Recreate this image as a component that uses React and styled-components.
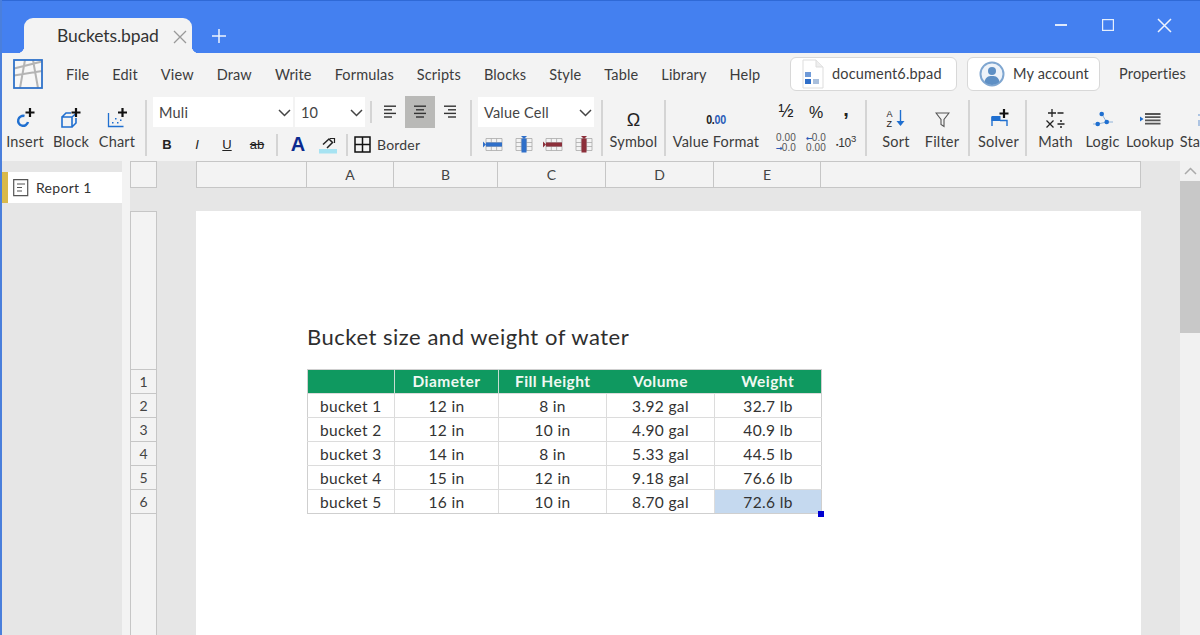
import React from "react";
import styled, { createGlobalStyle } from "styled-components";

const Global = createGlobalStyle`
  html, body { margin: 0; padding: 0; height: 100%; overflow: hidden; }
  body { font-family: Lato, "Open Sans", sans-serif; color: #3a3a3a; }
  #root { height: 100%; }
  * { box-sizing: border-box; }
`;

const Win = styled.div`
  width: 1200px; height: 635px; display: flex; flex-direction: column; overflow: hidden;
  border-left: 2px solid #4a7fdc; background: #f3f3f3;
`;
const TitleBar = styled.div`
  height: 53px; flex: none; background: #4480f0; border-top: 1px solid #2f69d6;
  display: flex; align-items: flex-end; padding-left: 22px;
`;
const Tab = styled.div`
  position: relative; width: 168px; height: 35px; background: #f3f3f3; border-radius: 9px 9px 0 0;
  display: flex; align-items: center; padding: 0 0 1px 33px; font-size: 17.5px; color: #333; letter-spacing: -.1px;
  &::before, &::after { content: ""; position: absolute; bottom: 0; width: 7px; height: 7px; }
  &::before { left: -7px; background: radial-gradient(circle at 0 0, transparent 7px, #f3f3f3 7.5px); }
  &::after { right: -7px; background: radial-gradient(circle at 100% 0, transparent 7px, #f3f3f3 7.5px); }
`;
const TabClose = styled.svg`margin-left: 14px; flex: none; margin-top: 3px;`;
const NewTab = styled.svg`margin: 0 0 10px 20px; flex: none;`;
const WinControls = styled.div`
  margin-left: auto; align-self: stretch; display: flex; align-items: flex-start; padding: 15px 8px 0 0;
`;
const WinBtn = styled.div`
  width: ${p => p.$w}px; height: 18px; display: flex; align-items: center; justify-content: center;
`;

const MenuBar = styled.div`
  height: 42px; flex: none; display: flex; align-items: center; padding-left: 11px; font-size: 14.5px; color: #3c3c3c;
`;
const Logo = styled.svg`flex: none; margin-right: 23px; margin-top: -1px;`;
const Menu = styled.nav`display: flex; gap: 23px; letter-spacing: .15px;`;
const PillRow = styled.div`margin-left: auto; display: flex; align-items: center; gap: 10px; padding-right: 14px; margin-top: -1px;`;
const Pill = styled.div`
  height: 34px; width: ${p => p.$w}px; background: #fff; border: 1px solid #d8d8d8; border-radius: 6px;
  display: flex; align-items: center; gap: 8px; padding-left: ${p => p.$pl}px; letter-spacing: .15px; white-space: nowrap;
`;
const Properties = styled.span`margin-left: 9px; letter-spacing: .15px;`;

const Toolbar = styled.div`
  height: 66px; flex: none; display: flex; align-items: center; overflow: hidden; font-size: 14.5px; color: #3c3c3c;
`;
const Divider = styled.div`
  flex: none; width: 2px; height: ${p => p.$h || 56}px; background: #d4d4d4; margin-left: ${p => p.$ml || 0}px;
`;
const Group = styled.div`
  flex: none; width: ${p => p.$w}px; height: 100%; display: flex; padding-left: ${p => p.$pl || 0}px;
`;
const StackGroup = styled(Group)`flex-direction: column;`;
const LargeBtn = styled.div`
  flex: none; width: ${p => p.$w || 46}px; height: 100%; display: flex; flex-direction: column; align-items: center;
  white-space: nowrap; letter-spacing: .2px;
`;
const IconSlot = styled.div`
  height: 36px; display: flex; align-items: flex-end; justify-content: center; padding-bottom: 3px; flex: none;
`;
const Label = styled.span`line-height: 20px; height: 20px; margin-top: 1px;`;
const Row1 = styled.div`height: 33px; display: flex; align-items: center; flex: none;`;
const Row2 = styled.div`height: 33px; display: flex; align-items: center; flex: none;`;
const Select = styled.div`
  height: 30px; width: ${p => p.$w}px; background: #fff; display: flex; align-items: center; justify-content: space-between;
  padding: 2px 2px 0 6px; margin-right: ${p => p.$mr || 0}px; font-size: 14.5px; letter-spacing: .2px; flex: none; color: #444;
`;
const AlignBtn = styled.div`
  width: 30px; height: 32px; display: flex; align-items: center; justify-content: center; flex: none;
  margin-left: ${p => p.$ml || 0}px; background: ${p => (p.$active ? "#b9b9b7" : "transparent")};
`;
const FmtBtn = styled.div`
  width: 30px; height: 30px; display: flex; align-items: center; justify-content: center; flex: none;
`;
const FontGlyph = styled.span`
  width: 30px; text-align: center; flex: none; font-family: "Liberation Sans", sans-serif; font-size: 13px; color: #222;
  font-weight: ${p => p.$b ? 700 : 400}; font-style: ${p => p.$i ? "italic" : "normal"};
  text-decoration: ${p => p.$line || "none"}; margin-left: ${p => p.$ml || 0}px;
`;
const ColorA = styled.span`
  width: 30px; text-align: center; flex: none; margin-left: 5px; font-family: "Liberation Sans", sans-serif; font-weight: 700; font-size: 20px; color: #0b2a8f;
`;
const BorderGap = styled.span`width: 6px; flex: none;`;
const BorderLabel = styled.span`margin-left: 6px; letter-spacing: .2px; font-size: 14px;`;
const Omega = styled.span`font-family: "Liberation Sans", sans-serif; font-size: 18px; color: #222; line-height: 20px; margin-bottom: -2px;`;
const ValueFmt = styled.span`
  display: inline-block; transform: scaleX(.82); font-family: "Liberation Sans", sans-serif; font-size: 13px; font-weight: 700; color: #222; padding-bottom: 1px; letter-spacing: -.3px;
  b { color: #2a5cb8; font-weight: 700; }
`;
const FmtGrid = styled.div`
  display: grid; grid-template-columns: repeat(3, 30px); grid-template-rows: 32px 32px; align-self: center; margin-left: 5px;
`;
const FmtText = styled.span`
  font-family: "Liberation Sans", sans-serif; font-size: ${p => p.$s || 16}px; color: #222; font-weight: ${p => p.$b ? 700 : 400}; line-height: 1;
  padding-top: ${p => p.$pt || 0}px; padding-bottom: ${p => p.$pb || 0}px;
`;
const Dec = styled.span`
  font-family: "Liberation Sans", sans-serif; font-size: 10px; line-height: 10px; color: #555; text-align: center; display: block; letter-spacing: .1px;
  i { font-family: "DejaVu Sans", sans-serif; color: #2a5cb8; font-style: normal; font-weight: 700; font-size: 8px; letter-spacing: -1px; line-height: 8px; }
`;
const Pow = styled.span`
  font-family: "Liberation Sans", sans-serif; font-size: 12px; color: #333; letter-spacing: -.3px;
  small { font-size: 7px; }
  sup { font-size: 9.500px; line-height: 0; }
`;

const Workspace = styled.div`flex: 1; min-height: 0; display: flex;`;
const Sidebar = styled.aside`
  width: 120px; flex: none; background: #e6e6e6; padding-top: 11px; margin-right: 8px;
`;
const SheetTab = styled.div`
  height: 31px; background: #fff; border-left: 6px solid #d9b94a; display: flex; align-items: center; padding-left: 5px; gap: 7px;
  font-size: 14px; color: #333; letter-spacing: .3px;
`;
const Canvas = styled.div`
  flex: 1; min-width: 0; background: #e6e6e6; display: grid; grid-template-columns: 27px 945px; column-gap: 39px;
  grid-template-rows: 27px 1fr; row-gap: 23px; overflow: hidden;
`;
const RulerBox = styled.div`background: #f3f3f3; border: 1px solid #c6c6c6;`;
const ColRuler = styled.div`display: flex; background: #f3f3f3; border: 1px solid #c6c6c6;`;
const ColHead = styled.div`
  width: ${p => p.$w}px; flex: ${p => p.$grow ? 1 : "none"}; display: flex; align-items: center; justify-content: center; font-size: 14px; color: #444;
  border-right: ${p => p.$grow ? "none" : "1px solid #c6c6c6"};
`;
const RowRuler = styled.div`display: flex; flex-direction: column; background: #f3f3f3; border: 1px solid #c6c6c6; border-bottom: none;`;
const RowHead = styled.div`
  height: ${p => p.$h || 24}px; flex: ${p => p.$grow ? 1 : "none"}; display: flex; align-items: center; justify-content: center;
  font-size: 14px; color: #444; border-bottom: ${p => p.$grow ? "none" : "1px solid #c6c6c6"};
`;
const Page = styled.div`background: #fff; padding: 110px 0 0 111px; min-height: 0;`;
const Title = styled.h1`
  margin: 0 0 16px; height: 32px; line-height: 32px; font-size: 22px; font-weight: 400; color: #2e2e2e; letter-spacing: .52px; padding-bottom: 1px;
`;
const TableWrap = styled.div`position: relative; width: 514px;`;
const Table = styled.table`
  width: 514px; table-layout: fixed; border-collapse: collapse; font-size: 15.5px; color: #333;
`;
const Th = styled.th`
  height: 24px; padding: 0 0 2px; background: #0f9960; color: #f0f8f2; font-weight: 700; font-size: 15.5px; letter-spacing: .45px; text-align: center;
  border-top: 1px solid #cfcfcf;
  border-right: ${p => (p.$sep ? "1px solid #c8dcd2" : "none")};
  &:first-child { border-left: 1px solid #cfcfcf; }
  &:last-child { border-right: 1px solid #cfcfcf; }
`;
const Td = styled.td`
  height: 24px; padding: ${p => (p.$left ? "0 0 0 12px" : "0")}; text-align: ${p => (p.$left ? "left" : "center")};
  border: 1px solid #dcdcdc; background: ${p => (p.$sel ? "#c5d9ef" : "#fff")}; letter-spacing: .35px;
  tr:last-child & { border-bottom-color: #cfcfcf; }
  &:first-child { border-left-color: #cfcfcf; }
  &:last-child { border-right-color: #cfcfcf; }
`;
const Handle = styled.div`
  position: absolute; right: -3px; bottom: -3px; width: 6px; height: 6px; background: #0000d0;
`;
const Scroll = styled.div`width: 20px; flex: none; display: flex; flex-direction: column; background: #f1f1f1;`;
const ScrollUp = styled.div`height: 20px; display: flex; align-items: center; justify-content: center;`;
const Thumb = styled.div`height: 152px; background: #c8c8c8;`;

const B = "#1f6fd0";
const K = "#111";
const Plus = ({ x, y }) => <path d={`M${x - 4.5} ${y}h9M${x} ${y - 4.5}v9`} stroke={K} strokeWidth="2.2" fill="none" />;

const InsertIcon = () => (
  <svg width="24" height="20" viewBox="0 0 24 20"><path d="M11.500 8a5 5 0 1 0 3.500 6" fill="none" stroke={B} strokeWidth="2.400" /><Plus x={17} y={4.500} /></svg>
);
const BlockIcon = () => (
  <svg width="24" height="20" viewBox="0 0 24 20"><path d="M3 9h10v10H3zM3 9l4-4h5M13 9l3.500-3M17 10v5l-4 4" fill="none" stroke={B} strokeWidth="1.600" /><Plus x={17} y={4.500} /></svg>
);
const ChartIcon = () => (
  <svg width="24" height="20" viewBox="0 0 24 20"><path d="M3.500 5v13.500h15" fill="none" stroke={B} strokeWidth="1.300" /><path d="M7 14h1.500v1.500H7zM10 10h1.500v1.500H10zM12 14h1.500v1.500H12zM15 11.500h1.500V13H15z" fill={B} /><Plus x={17.500} y={4.500} /></svg>
);
const Chevron = ({ c = "#444", up }) => (
  <svg width="13" height="8" viewBox="0 0 13 8"><path d={up ? "M1 7l5.500-5.500L12 7" : "M1 1l5.500 5.500L12 1"} fill="none" stroke={c} strokeWidth="1.500" /></svg>
);
const AlignIcon = ({ mode }) => {
  const lines = mode === "l" ? [[1,12],[1,8],[1,12],[1,8]] : mode === "c" ? [[1,12],[3,8],[1,12],[3,8]] : [[1,12],[5,8],[1,12],[5,8]];
  return (
    <svg width="14" height="13" viewBox="0 0 14 13">
      {lines.map(([x, w], i) => <rect key={i} x={x} y={i * 3.6 + .5} width={w} height="1.400" fill="#333" />)}
    </svg>
  );
};
const PaintIcon = () => (
  <svg width="20" height="18" viewBox="0 0 20 18">
    <path d="M5 8.500l6-5.500 3.500 3.500-5.500 5.500" fill="none" stroke="#222" strokeWidth="1.500" />
    <path d="M12 2.500h4.500V7" fill="none" stroke="#222" strokeWidth="1.200" />
    <rect x="1" y="13" width="18" height="4.500" fill="#a7e3f2" />
  </svg>
);
const BorderIcon = () => (
  <svg width="17" height="17" viewBox="0 0 17 17"><path d="M1 1h15v15H1zM8.500 1v15M1 8.500h15" fill="none" stroke="#111" strokeWidth="1.500" /></svg>
);
const TableIcon = ({ c, vertical }) => (
  <svg width="20" height="17" viewBox="0 0 20 17">
    <path d="M3 2.500h16v12H3zM3 6.500h16M3 10.500h16M8.300 2.500v12M13.600 2.500v12" fill="none" stroke="#aaa" strokeWidth=".8" />
    {vertical
      ? <><rect x="8.500" y="2.500" width="5" height="14" fill={c} /><path d="M8 0h6l-3 3z" fill={c} /></>
      : <><rect x="3" y="6.500" width="16" height="4" fill={c} /><path d="M0 5.500v6l3-3z" fill={c} /></>}
  </svg>
);
const SortIcon = () => (
  <svg width="22" height="22" viewBox="0 0 22 22">
    <text x="1.500" y="10.500" fontFamily="Liberation Sans" fontSize="9" fill="#222">A</text>
    <text x="1.500" y="21" fontFamily="Liberation Sans" fontSize="9" fill="#222">Z</text>
    <path d="M15.500 4v12" stroke={B} strokeWidth="1.400" /><path d="M11.500 15h8l-4 5z" fill={B} />
  </svg>
);
const FilterIcon = () => (
  <svg width="15" height="16" viewBox="0 0 15 16"><path d="M1 1h13L9 7.500V14.500L6 12.500V7.500z" fill="none" stroke="#555" strokeWidth="1.100" /></svg>
);
const SolverIcon = () => (
  <svg width="26" height="20" viewBox="0 0 26 20"><path d="M6 9v9M14 12.500h7v5.500" fill="none" stroke={B} strokeWidth="1.400" /><path d="M5.500 8h9v5h-9z" fill={B} /><Plus x={18} y={5.500} /></svg>
);
const MathIcon = () => (
  <svg width="21" height="20" viewBox="0 0 21 20">
    <path d="M3 5h8M7 1v8M12.500 5h6M1.500 12.500l7 7M8.500 12.500l-7 7M12.500 16h7" stroke="#222" strokeWidth="1.300" fill="none" />
    <circle cx="16" cy="13" r="1" fill="#222" /><circle cx="16" cy="19" r="1" fill="#222" />
  </svg>
);
const LogicIcon = () => (
  <svg width="22" height="18" viewBox="0 0 22 18">
    <path d="M9.700 4l5 8-9 2M1 14h3M16 12h5" stroke="#8fb2d8" strokeWidth="1" fill="none" />
    <circle cx="9.700" cy="4" r="2.300" fill={B} /><circle cx="14.700" cy="12" r="2.300" fill={B} /><circle cx="5.700" cy="14" r="2.300" fill={B} />
  </svg>
);
const LookupIcon = () => (
  <svg width="21" height="16" viewBox="0 0 21 16">
    <path d="M0 4.500l3.500 2.500L0 9.500z" fill={B} />
    <path d="M5 2h15.500M5 5.200h15.500M5 8.400h15.500M5 11.600h15.500" stroke="#555" strokeWidth="1.800" />
  </svg>
);
const StatsIcon = () => (
  <svg width="24" height="18" viewBox="0 0 24 18"><path d="M2 16V10M2 6V4" stroke="#7fa6d8" strokeWidth="1.200" /></svg>
);
const ReportIcon = () => (
  <svg width="16" height="18" viewBox="0 0 16 18"><path d="M.7.700h14v16H.7z" fill="none" stroke="#555" strokeWidth="1.200" /><path d="M4 5h8M4 8.500h5M4 12h5" stroke="#555" strokeWidth="1.200" /></svg>
);
const AppLogo = () => (
  <Logo width="30" height="30" viewBox="0 0 30 30">
    <rect x="1" y="1" width="28" height="28" fill="#f7f7f7" />
    <path d="M12 1L7 29M20 1l5 28M1 9.500L29 2.500M1 16.500L29 12" stroke="#b4b4b4" strokeWidth="2" fill="none" />
    <rect x="1" y="1" width="28" height="28" fill="none" stroke="#2f72c9" strokeWidth="1.800" />
  </Logo>
);
const DocIcon = () => (
  <svg width="22" height="30" viewBox="0 0 22 30">
    <path d="M1 1h13l7 7v21H1z" fill="#fff" stroke="#ddd" /><path d="M14 1v7h7" fill="#eee" stroke="#ddd" />
    <rect x="3" y="13" width="6" height="5" fill="#6f9ad8" /><rect x="3" y="20" width="6" height="5" fill="#2f6fc9" /><rect x="11" y="20" width="6" height="5" fill="#a9bfdc" />
  </svg>
);
const Avatar = () => (
  <svg width="26" height="26" viewBox="0 0 26 26">
    <circle cx="13" cy="13" r="11.500" fill="#eef3f9" stroke="#7fa6d0" strokeWidth="2" />
    <circle cx="13" cy="10" r="4" fill="#5e8fc4" />
    <path d="M5.500 21c1-5 3.500-6 7.500-6s6.500 1 7.500 6a11 11 0 0 1-15 0z" fill="#5e8fc4" />
  </svg>
);

const menus = ["File","Edit","View","Draw","Write","Formulas","Scripts","Blocks","Style","Table","Library","Help"];
const cols = [["A",87],["B",104],["C",108],["D",108],["E",107]];
const rows = [
  ["bucket 1","12 in","8 in","3.92 gal","32.7 lb"],
  ["bucket 2","12 in","10 in","4.90 gal","40.9 lb"],
  ["bucket 3","14 in","8 in","5.33 gal","44.5 lb"],
  ["bucket 4","15 in","12 in","9.18 gal","76.6 lb"],
  ["bucket 5","16 in","10 in","8.70 gal","72.6 lb"],
];

const Large = ({ w, icon, label }) => (
  <LargeBtn $w={w}><IconSlot>{icon}</IconSlot><Label>{label}</Label></LargeBtn>
);

export default function App() {
  return (
    <Win>
      <Global />
      <TitleBar>
        <Tab>
          Buckets.bpad
          <TabClose width="14" height="14" viewBox="0 0 14 14"><path d="M1 1l12 12M13 1L1 13" stroke="#999" strokeWidth="1.300" /></TabClose>
        </Tab>
        <NewTab width="14" height="14" viewBox="0 0 14 14"><path d="M0 7h14M7 0v14" stroke="#fff" strokeWidth="1.500" opacity=".9" /></NewTab>
        <WinControls>
          <WinBtn $w={36}><svg width="12" height="2"><rect width="12" height="2" fill="#dfe9fb" /></svg></WinBtn>
          <WinBtn $w={57}><svg width="12" height="12" viewBox="0 0 12 12"><rect x=".6" y=".6" width="10.800" height="10.800" fill="none" stroke="#e6eefc" strokeWidth="1.200" /></svg></WinBtn>
          <WinBtn $w={56}><svg width="15" height="15" viewBox="0 0 15 15"><path d="M1 1l13 13M14 1L1 14" stroke="#eef3fd" strokeWidth="1.500" /></svg></WinBtn>
        </WinControls>
      </TitleBar>

      <MenuBar>
        <AppLogo />
        <Menu>{menus.map(m => <span key={m}>{m}</span>)}</Menu>
        <PillRow>
          <Pill $w={167} $pl={11}><DocIcon />document6.bpad</Pill>
          <Pill $w={133} $pl={11}><Avatar />My account</Pill>
          <Properties>Properties</Properties>
        </PillRow>
      </MenuBar>

      <Toolbar>
        <Group $w={143}>
          <Large icon={<InsertIcon />} label="Insert" />
          <Large icon={<BlockIcon />} label="Block" />
          <Large icon={<ChartIcon />} label="Chart" />
        </Group>
        <Divider />
        <StackGroup $w={323} $pl={6}>
          <Row1>
            <Select $w={140} $mr={2}>Muli<Chevron /></Select>
            <Select $w={70}>10<Chevron /></Select>
            <Divider $h={22} $ml={5} />
            <AlignBtn $ml={3}><AlignIcon mode="l" /></AlignBtn>
            <AlignBtn $active><AlignIcon mode="c" /></AlignBtn>
            <AlignBtn><AlignIcon mode="r" /></AlignBtn>
          </Row1>
          <Row2>
            <FontGlyph $b $ml={-1}>B</FontGlyph>
            <FontGlyph $i>I</FontGlyph>
            <FontGlyph $line="underline">U</FontGlyph>
            <FontGlyph $line="line-through">ab</FontGlyph>
            <Divider $h={22} $ml={4} />
            <ColorA>A</ColorA>
            <FmtBtn><PaintIcon /></FmtBtn>
            <Divider $h={22} $ml={3} />
            <BorderGap />
            <BorderIcon />
            <BorderLabel>Border</BorderLabel>
          </Row2>
        </StackGroup>
        <Divider />
        <StackGroup $w={129} $pl={6}>
          <Row1><Select $w={116}>Value Cell<Chevron /></Select></Row1>
          <Row2>
            <FmtBtn><TableIcon c="#2f6fc9" /></FmtBtn>
            <FmtBtn><TableIcon c="#2f6fc9" vertical /></FmtBtn>
            <FmtBtn><TableIcon c="#8c2f3a" /></FmtBtn>
            <FmtBtn><TableIcon c="#8c2f3a" vertical /></FmtBtn>
          </Row2>
        </StackGroup>
        <Divider />
        <Group $w={61}><Large w={61} icon={<Omega>Ω</Omega>} label="Symbol" /></Group>
        <Divider />
        <Group $w={199}>
          <Large w={100} icon={<ValueFmt>0.<b>00</b></ValueFmt>} label="Value Format" />
          <FmtGrid>
            <FmtBtn><FmtText $s={18}>½</FmtText></FmtBtn>
            <FmtBtn><FmtText $s={16} $pt={3}>%</FmtText></FmtBtn>
            <FmtBtn><FmtText $s={20} $b $pb={5}>,</FmtText></FmtBtn>
            <FmtBtn><Dec>0.00<br /><i>→</i>0.0</Dec></FmtBtn>
            <FmtBtn><Dec><i>←</i>0.0<br />0.00</Dec></FmtBtn>
            <FmtBtn><Pow><small>▪</small>10<sup>3</sup></Pow></FmtBtn>
          </FmtGrid>
        </Group>
        <Divider />
        <Group $w={101} $pl={6}>
          <Large icon={<SortIcon />} label="Sort" />
          <Large icon={<FilterIcon />} label="Filter" />
        </Group>
        <Divider />
        <Group $w={55} $pl={1}><Large w={55} icon={<SolverIcon />} label="Solver" /></Group>
        <Divider />
        <Group $w={172} $pl={5}>
          <Large w={47} icon={<MathIcon />} label="Math" />
          <Large w={47} icon={<LogicIcon />} label="Logic" />
          <Large w={48} icon={<LookupIcon />} label="Lookup" />
          <Large w={70} icon={<StatsIcon />} label="Statistics" />
        </Group>
      </Toolbar>

      <Workspace>
        <Sidebar>
          <SheetTab><ReportIcon />Report 1</SheetTab>
        </Sidebar>
        <Canvas>
          <RulerBox />
          <ColRuler>
            <ColHead $w={110} />
            {cols.map(([c, w]) => <ColHead key={c} $w={w}>{c}</ColHead>)}
            <ColHead $grow />
          </ColRuler>
          <RowRuler>
            <RowHead $h={158} />
            {[1,2,3,4,5,6].map(n => <RowHead key={n}>{n}</RowHead>)}
            <RowHead $grow />
          </RowRuler>
          <Page>
            <Title>Bucket size and weight of water</Title>
            <TableWrap>
              <Table>
                <colgroup>{cols.map(([c, w]) => <col key={c} style={{ width: w }} />)}</colgroup>
                <thead>
                  <tr>
                    <Th $sep />
                    <Th $sep>Diameter</Th>
                    <Th>Fill Height</Th>
                    <Th>Volume</Th>
                    <Th>Weight</Th>
                  </tr>
                </thead>
                <tbody>
                  {rows.map((r, i) => (
                    <tr key={i}>
                      {r.map((v, j) => <Td key={j} $left={j === 0} $sel={i === 4 && j === 4}>{v}</Td>)}
                    </tr>
                  ))}
                </tbody>
              </Table>
              <Handle />
            </TableWrap>
          </Page>
        </Canvas>
        <Scroll>
          <ScrollUp><Chevron c="#aaa" up /></ScrollUp>
          <Thumb />
        </Scroll>
      </Workspace>
    </Win>
  );
}
